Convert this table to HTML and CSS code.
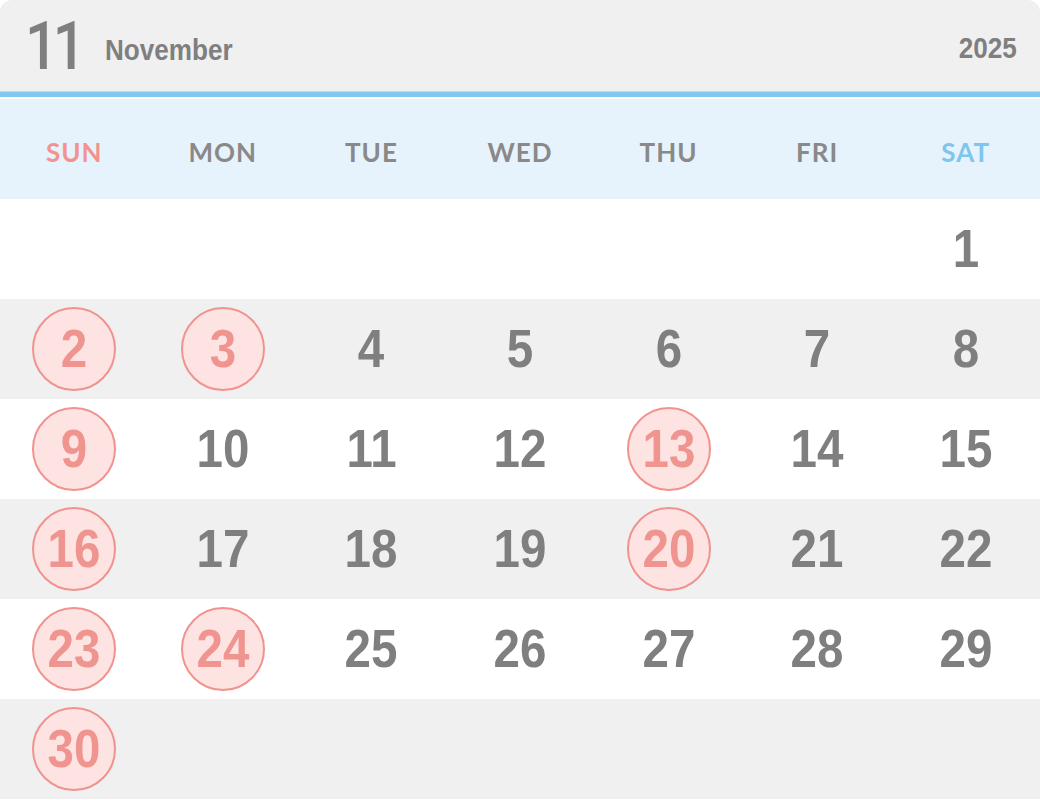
FILE: index.html
```html
<!DOCTYPE html>
<html lang="en">
<head>
<meta charset="utf-8">
<title>November 2025</title>
<link rel="stylesheet" href="styles.css">
</head>
<body>
<div class="calendar">
  <header class="cal-head">
    <div class="month-num"><span>11</span></div>
    <div class="month-name"><span>November</span></div>
    <div class="year"><span>2025</span></div>
  </header>
  <div class="rule"></div>
  <div class="weekdays">
    <div class="wd sun">SUN</div>
    <div class="wd">MON</div>
    <div class="wd">TUE</div>
    <div class="wd">WED</div>
    <div class="wd">THU</div>
    <div class="wd">FRI</div>
    <div class="wd sat">SAT</div>
  </div>
  <div class="week">
    <div class="day"></div><div class="day"></div><div class="day"></div><div class="day"></div><div class="day"></div><div class="day"></div>
    <div class="day"><span class="n"><i>1</i></span></div>
  </div>
  <div class="week alt">
    <div class="day"><span class="n hol"><i>2</i></span></div>
    <div class="day"><span class="n hol"><i>3</i></span></div>
    <div class="day"><span class="n"><i>4</i></span></div>
    <div class="day"><span class="n"><i>5</i></span></div>
    <div class="day"><span class="n"><i>6</i></span></div>
    <div class="day"><span class="n"><i>7</i></span></div>
    <div class="day"><span class="n"><i>8</i></span></div>
  </div>
  <div class="week">
    <div class="day"><span class="n hol"><i>9</i></span></div>
    <div class="day"><span class="n"><i>10</i></span></div>
    <div class="day"><span class="n"><i>11</i></span></div>
    <div class="day"><span class="n"><i>12</i></span></div>
    <div class="day"><span class="n hol"><i>13</i></span></div>
    <div class="day"><span class="n"><i>14</i></span></div>
    <div class="day"><span class="n"><i>15</i></span></div>
  </div>
  <div class="week alt">
    <div class="day"><span class="n hol"><i>16</i></span></div>
    <div class="day"><span class="n"><i>17</i></span></div>
    <div class="day"><span class="n"><i>18</i></span></div>
    <div class="day"><span class="n"><i>19</i></span></div>
    <div class="day"><span class="n hol"><i>20</i></span></div>
    <div class="day"><span class="n"><i>21</i></span></div>
    <div class="day"><span class="n"><i>22</i></span></div>
  </div>
  <div class="week">
    <div class="day"><span class="n hol"><i>23</i></span></div>
    <div class="day"><span class="n hol"><i>24</i></span></div>
    <div class="day"><span class="n"><i>25</i></span></div>
    <div class="day"><span class="n"><i>26</i></span></div>
    <div class="day"><span class="n"><i>27</i></span></div>
    <div class="day"><span class="n"><i>28</i></span></div>
    <div class="day"><span class="n"><i>29</i></span></div>
  </div>
  <div class="week alt">
    <div class="day"><span class="n hol"><i>30</i></span></div>
    <div class="day"></div><div class="day"></div><div class="day"></div><div class="day"></div><div class="day"></div><div class="day"></div>
  </div>
</div>
</body>
</html>
```
FILE: styles.css
```css
* { box-sizing: border-box; }
html, body { margin: 0; padding: 0; background: #ffffff; }
body { font-family: "Liberation Sans", Arial, sans-serif; color: #7f7f7f; }

.calendar { width: 1040px; }

.cal-head {
  height: 91px;
  background: #f0f0f0;
  border-radius: 12px 12px 0 0;
  display: flex;
  align-items: flex-start;
}
.month-num {
  font-family: Roboto, "Liberation Sans", sans-serif;
  font-weight: 500;
  font-size: 66px;
  line-height: 66px;
  margin: 14px 0 0 25px;
  letter-spacing: -6px;
  color: #7f7f7f;
}
.month-num span {
  display: inline-block;
  transform: scaleX(0.88);
  transform-origin: left center;
}
.month-name {
  font-size: 30px;
  font-weight: bold;
  line-height: 30px;
  margin: 35px 0 0 17px;
  flex: 1;
}
.month-name span {
  display: inline-block;
  transform: scaleX(0.87);
  transform-origin: left center;
}
.year {
  font-size: 30px;
  font-weight: bold;
  line-height: 30px;
  margin: 33px 23px 0 0;
}
.year span {
  display: inline-block;
  transform: scaleX(0.87);
  transform-origin: right center;
}

.rule {
  height: 8px;
  background: #ffffff;
  border-top: 1px solid #b5dcf4;
  box-shadow: inset 0 5px 0 #80c7f1;
}

.weekdays {
  height: 100px;
  background: #e6f3fc;
  display: grid;
  grid-template-columns: repeat(7, 1fr);
}
.wd {
  display: flex;
  align-items: center;
  justify-content: center;
  padding-top: 6px;
  font-family: Lato, "Liberation Sans", sans-serif;
  font-weight: bold;
  font-size: 26px;
  letter-spacing: 1px;
  color: #8a8888;
}
.wd.sun { color: #f19490; }
.wd.sat { color: #7ec5ef; }

.week {
  height: 100px;
  display: grid;
  grid-template-columns: repeat(7, 1fr);
  background: #ffffff;
}
.week.alt { background: #f0f0f0; }

.day {
  display: flex;
  align-items: center;
  justify-content: center;
}
.n {
  display: flex;
  align-items: center;
  justify-content: center;
  width: 84px;
  height: 84px;
  border-radius: 50%;
  font-size: 54px;
  font-weight: bold;
  line-height: 1;
  color: #7f7f7f;
  padding-bottom: 3px;
}
.n i {
  font-style: normal;
  display: inline-block;
  transform: scaleX(0.88);
}
.n.hol {
  background: #fde4e2;
  border: 2px solid #f1928e;
  color: #f09490;
}
```
